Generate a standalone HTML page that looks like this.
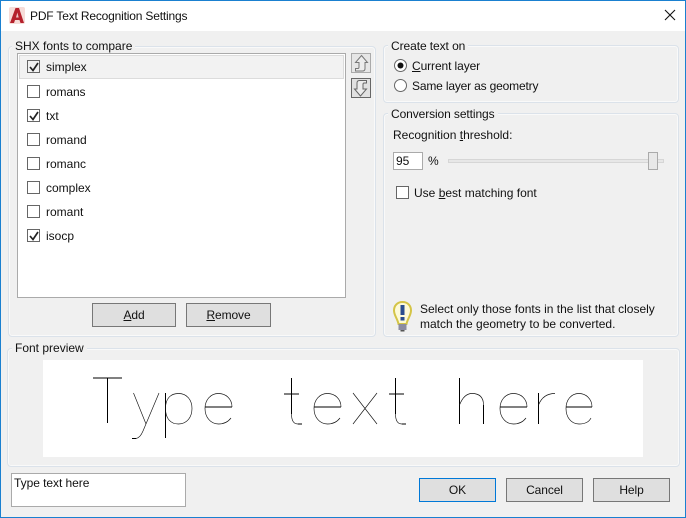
<!DOCTYPE html>
<html><head><meta charset="utf-8"><style>
html,body{margin:0;padding:0;width:686px;height:518px;overflow:hidden;background:#f0f0f0}
#w{position:absolute;left:0;top:0;width:686px;height:518px;background:#f0f0f0;font:12px "Liberation Sans",sans-serif;color:#111;overflow:hidden}
#w div{position:absolute;box-sizing:border-box}
.t{white-space:nowrap;line-height:16px;height:16px}
.g{border:1px solid #dbe2ea;border-radius:4px;box-shadow:inset 0 0 0 1px #f9f9f9}
.l{background:#f0f0f0;padding:0 3px}
.c{width:13px;height:13px;border:1px solid #666;background:#fff}
.b{background:#dfdfdf;border:1px solid #777;text-align:center;line-height:22px;letter-spacing:-.1px}
svg{position:absolute;left:0;top:0}
</style></head><body><div id="w">
<div style="left:0;top:0;width:686px;height:31px;background:#fff"></div>
<div class="t" style="left:30px;top:8px;letter-spacing:-.18px">PDF Text Recognition Settings</div>

<div class="g" style="left:8px;top:46px;width:368px;height:291px"></div>
<div class="g" style="left:383px;top:45px;width:296px;height:58px"></div>
<div class="g" style="left:383px;top:113px;width:296px;height:224px"></div>
<div class="g" style="left:7px;top:348px;width:673px;height:119px"></div>
<div class="t l" style="left:12px;top:38px">SHX fonts to compare</div>
<div class="t l" style="left:388px;top:38px;letter-spacing:-.08px">Create text on</div>
<div class="t l" style="left:388px;top:106px;letter-spacing:-.1px">Conversion settings</div>
<div class="t l" style="left:12px;top:340px">Font preview</div>

<div style="left:17px;top:53px;width:329px;height:245px;background:#fff;border:1px solid #aaa"></div>
<div style="left:19px;top:55px;width:325px;height:24px;background:#f2f2f2;border:1px solid #dcdcdc"></div>
<div class="c" style="left:27px;top:60px;background:#f2f2f2"></div><div class="t" style="left:46px;top:59px">simplex</div>
<div class="c" style="left:27px;top:85px"></div><div class="t" style="left:46px;top:84px;letter-spacing:-.1px">romans</div>
<div class="c" style="left:27px;top:109px"></div><div class="t" style="left:46px;top:108px">txt</div>
<div class="c" style="left:27px;top:133px"></div><div class="t" style="left:46px;top:132px">romand</div>
<div class="c" style="left:27px;top:157px"></div><div class="t" style="left:46px;top:156px">romanc</div>
<div class="c" style="left:27px;top:181px"></div><div class="t" style="left:46px;top:180px">complex</div>
<div class="c" style="left:27px;top:205px"></div><div class="t" style="left:46px;top:204px">romant</div>
<div class="c" style="left:27px;top:229px"></div><div class="t" style="left:46px;top:228px">isocp</div>

<div class="b" style="left:92px;top:303px;width:84px;height:24px"><u>A</u>dd</div>
<div class="b" style="left:186px;top:303px;width:85px;height:24px"><u>R</u>emove</div>

<div style="left:351px;top:53px;width:20px;height:20px;background:#e6e6e6;border:1px solid #aaa"></div>
<div style="left:351px;top:78px;width:20px;height:20px;background:#e1e1e1;border:1px solid #666"></div>

<div class="t" style="left:412px;top:58px;letter-spacing:-.1px"><u>C</u>urrent layer</div>
<div class="t" style="left:412px;top:78px;letter-spacing:-.17px">Same layer as <u>g</u>eometry</div>
<div class="t" style="left:393px;top:127px">Recognition <u>t</u>hreshold:</div>
<div style="left:393px;top:152px;width:30px;height:18px;background:#fff;border:1px solid #aaa"></div>
<div class="t" style="left:396px;top:153px">95</div>
<div class="t" style="left:428px;top:153px">%</div>
<div style="left:448px;top:159px;width:216px;height:4px;background:#e7e7e7;border:1px solid #d6d6d6"></div>
<div style="left:648px;top:152px;width:10px;height:18px;background:#e8e8e8;border:1px solid #aaa"></div>
<div class="c" style="left:396px;top:186px"></div>
<div class="t" style="left:414px;top:185px">Use <u>b</u>est matching font</div>
<div class="t" style="left:420px;top:301px">Select only those fonts in the list that closely</div>
<div class="t" style="left:420px;top:316px">match the geometry to be converted.</div>

<div style="left:43px;top:360px;width:600px;height:97px;background:#fff"></div>

<div style="left:11px;top:473px;width:175px;height:34px;background:#fff;border:1px solid #aaa"></div>
<div class="t" style="left:14px;top:475px;letter-spacing:-.05px">Type text here</div>
<div class="b" style="left:419px;top:478px;width:77px;height:24px;border-color:#0078d7">OK</div>
<div class="b" style="left:506px;top:478px;width:77px;height:24px">Cancel</div>
<div class="b" style="left:593px;top:478px;width:77px;height:24px">Help</div>

<svg width="686" height="518" viewBox="0 0 686 518" fill="none">
<!-- title icon -->
<rect x="9" y="7" width="16" height="17" rx="2" fill="#f6dcd8"/>
<path d="M10 23 L15.5 8 H19 L24 23 H20.500 L19.500 20 H15 L14 23 Z" fill="#b5212c"/>
<path d="M16 17.500 H18.700 L17.400 12.500 Z" fill="#eec6c6"/>
<!-- close -->
<path d="M665 10 L675 20 M675 10 L665 20" stroke="#111" stroke-width="1.100"/>
<!-- checks -->
<path d="M30 67 L33 70.500 L38 63" stroke="#222" stroke-width="1.700"/>
<path d="M30 116 L33 119.500 L38 112" stroke="#222" stroke-width="1.700"/>
<path d="M30 236 L33 239.500 L38 232" stroke="#222" stroke-width="1.700"/>
<!-- radios -->
<circle cx="400.500" cy="65.500" r="6" fill="#fff" stroke="#666"/>
<circle cx="400.500" cy="65.500" r="3" fill="#111"/>
<circle cx="400.500" cy="85.500" r="6" fill="#fff" stroke="#666"/>
<!-- up / down arrows -->
<path d="M361.500 55.500 L367.500 62.500 H365 V68.500 Q365 71 362.500 71 H355.500 V68.500 H358 Q359 68.500 359 67 V62.500 H355.500 Z" fill="#ececec" stroke="#777"/>
<path d="M360.500 96 L354.500 89 H357 V83 Q357 80.500 359.500 80.500 H366.500 V83 H364 Q363 83 363 84.500 V89 H366.500 Z" fill="#ececec" stroke="#666"/>
<!-- bulb -->
<path d="M402.500 302 C397 302 394 306 394 310.500 C394 315.500 397.500 318.500 398.500 324 H406.500 C407.500 318.500 411 315.500 411 310.500 C411 306 408 302 402.500 302 Z" fill="#fdfad8" stroke="#d4c446" stroke-width="2"/>
<rect x="398.500" y="324" width="8" height="6" fill="#8c8ca0"/>
<rect x="400.500" y="330" width="4" height="1.500" fill="#555"/>
<rect x="400.500" y="305" width="4" height="10" fill="#2a4d8f"/>
<rect x="400.500" y="317" width="4" height="3.500" fill="#2a4d8f"/>
<!-- preview glyphs: straight strokes -->
<g stroke="#000" stroke-width="1">
<path d="M93 378 H122 M107.500 378 V423"/>
<path d="M165.500 393 V438"/>
<path d="M205 407 H232 M314 407 H341 M500 407 H527 M566 407 H592"/>
<path d="M291.500 378 V414 M284 394 H299 M298 424 H302"/>
<path d="M395.500 378 V414 M389 394 H404 M402 424 H406"/>
<path d="M459.500 378 V424 M483.500 405 V424 M538.500 393 V424"/>
<path d="M132 438.500 H136"/>
</g>
<!-- preview glyphs: curves and diagonals -->
<g stroke="#111" stroke-width=".65">
<path d="M133.500 393 L146 424 M159 393 L143 431 Q140 438 136 438.500"/>
<path d="M165.500 408.500 C165.500 398 171 393.500 178.500 393.500 C187 393.500 192 400 192 408.500 C192 417 187 424 178.500 424 C171 424 165.500 419 165.500 408.500"/>
<path d="M232 407 C232 399 226 393.500 218.500 393.500 C210.500 393.500 205 400 205 408.500 C205 417 210.500 424 218.500 424 C224 424 228 422 231 418"/>
<path d="M291.500 414 Q291.500 424 298 424"/>
<path d="M341 407 C341 399 335 393.500 327.500 393.500 C319.500 393.500 314 400 314 408.500 C314 417 319.500 424 327.500 424 C333 424 337 422 340 418"/>
<path d="M353 393 L377 424 M377 393 L353 424"/>
<path d="M395.500 414 Q395.500 424 402 424"/>
<path d="M459.500 405 Q464 393.500 472 393.500 Q483.500 393.500 483.500 405"/>
<path d="M527 407 C527 399 521 393.500 513.500 393.500 C505.500 393.500 500 400 500 408.500 C500 417 505.500 424 513.500 424 C519 424 523 422 526 418"/>
<path d="M538.500 405 Q543 393.500 555 393.500"/>
<path d="M592 407 C592 399 586 393.500 579 393.500 C571 393.500 566 400 566 408.500 C566 417 571 424 579 424 C585 424 589 422 591 418"/>
</g>
</svg>
<div style="left:0;top:0;width:686px;height:518px;border:1px solid #1a80d0"></div>
</div></body></html>
